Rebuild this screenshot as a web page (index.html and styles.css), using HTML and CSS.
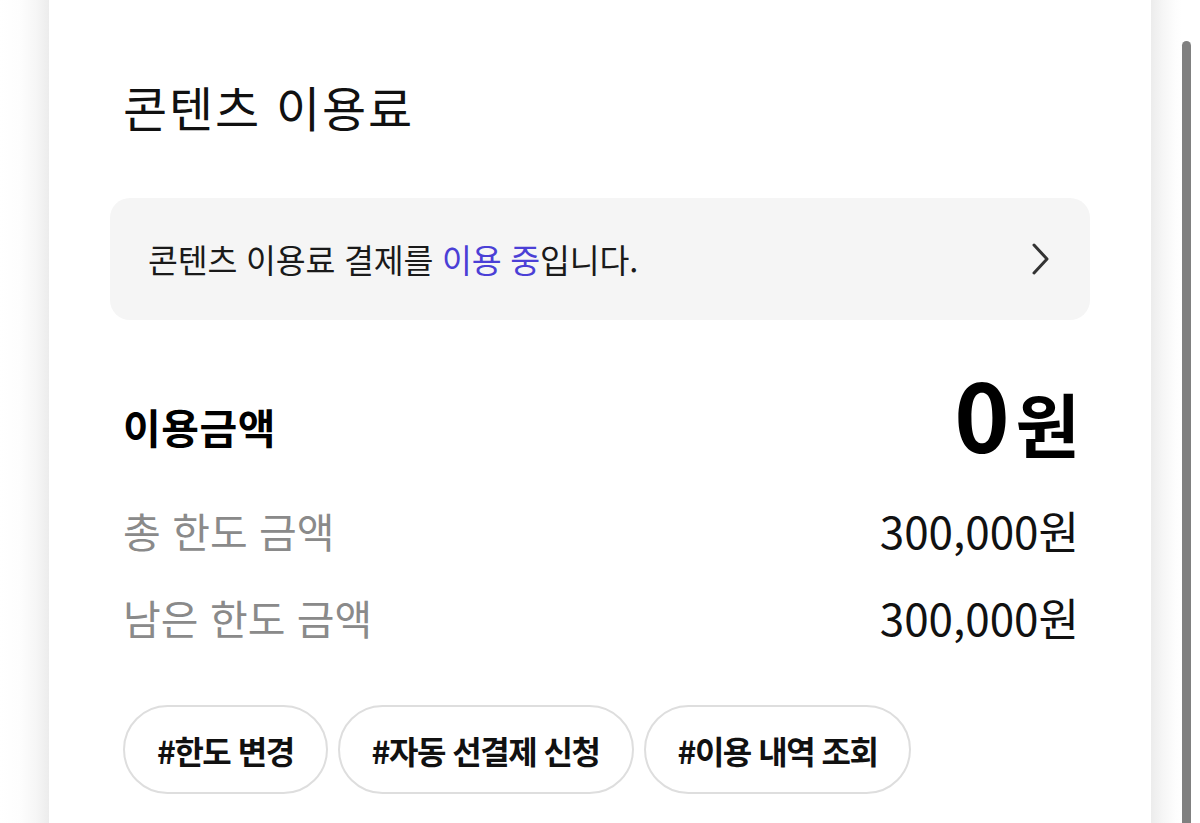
FILE: index.html
```html
<!DOCTYPE html>
<html lang="ko">
<head>
<meta charset="utf-8">
<link rel="stylesheet" href="styles.css">
</head>
<body>
<div class="page">
  <div class="side side-left"></div>
  <main class="card">
    <h1 class="title">콘텐츠 이용료</h1>
    <a class="status">
      <span class="status-text">콘텐츠 이용료 결제를 <span class="accent">이용 중</span>입니다.</span>
      <svg class="chev" width="22" height="36" viewBox="0 0 22 36"><path d="M4 4 L17 18 L4 32" fill="none" stroke="#333" stroke-width="3" stroke-linecap="round" stroke-linejoin="round"/></svg>
    </a>
    <div class="usage">
      <span class="usage-label">이용금액</span>
      <span class="usage-value"><span class="zero">0</span><span class="won">원</span></span>
    </div>
    <div class="rows">
      <div class="row">
        <span class="row-label">총 한도 금액</span>
        <span class="row-value">300,000원</span>
      </div>
      <div class="row">
        <span class="row-label">남은 한도 금액</span>
        <span class="row-value">300,000원</span>
      </div>
    </div>
    <div class="tags">
      <span class="tag">#한도 변경</span>
      <span class="tag">#자동 선결제 신청</span>
      <span class="tag">#이용 내역 조회</span>
    </div>
  </main>
  <div class="side side-right"></div>
</div>
<div class="scroll-thumb"></div>
</body>
</html>
```
FILE: styles.css
```css
html, body {
  margin: 0;
  padding: 0;
  background: #fff;
  height: 100%;
  overflow: hidden;
}
body {
  font-family: "Noto Sans CJK KR", "Noto Sans", sans-serif;
  color: #111;
}
.page {
  display: flex;
  height: 823px;
}
.side {
  flex: none;
}
.side-left {
  width: 49px;
  background: linear-gradient(to right, #fff 0px, #fdfdfd 20px, #f6f6f6 36px, #ececec 49px);
}
.side-right {
  width: 31px;
  background: linear-gradient(to right, #ececec 0px, #f6f6f6 12px, #fdfdfd 24px, #fff 31px);
}
.card {
  width: 1102px;
  flex: none;
  background: #fff;
  padding: 70px 61px 0;
  box-sizing: border-box;
}
.title {
  margin: 0 0 0 13px;
  font-size: 48px;
  font-weight: 400;
  line-height: 72px;
  letter-spacing: 1.8px;
  color: #111;
}
.status {
  margin-top: 56px;
  height: 122px;
  background: #f5f5f5;
  border-radius: 20px;
  display: flex;
  align-items: center;
  justify-content: space-between;
  padding: 0 38px;
  box-sizing: border-box;
}
.status-text {
  font-size: 32.5px;
  line-height: 40px;
  color: #1a1a1a;
  letter-spacing: -0.2px;
}
.accent {
  color: #4b3fd6;
}
.usage {
  display: flex;
  align-items: flex-end;
  justify-content: space-between;
  margin-top: 42px;
  padding: 0 10px 0 13px;
  height: 100px;
}
.usage-label {
  font-size: 41px;
  font-weight: 700;
  line-height: 50px;
  margin-bottom: 11px;
  letter-spacing: 0.5px;
  color: #000;
}
.usage-value {
  display: block;
  color: #000;
  font-weight: 700;
  font-size: 94px;
  line-height: 100px;
  height: 100px;
}
.zero {
  font-size: 94px;
  line-height: 100px;
}
.won {
  font-size: 70px;
  line-height: 70px;
  margin-left: 6px;
}
.rows {
  margin-top: 24px;
}
.row {
  display: flex;
  justify-content: space-between;
  align-items: center;
  padding: 0 13px;
  height: 87px;
}
.row-label {
  font-size: 41px;
  color: #8a8a8a;
}
.row-value {
  font-size: 44px;
  color: #111;
  margin-right: -2px;
}
.tags {
  display: flex;
  gap: 10px;
  padding-left: 13px;
  margin-top: 45px;
}
.tag {
  height: 89px;
  box-sizing: border-box;
  border: 2px solid #dedede;
  border-radius: 45px;
  padding: 0 32px;
  display: flex;
  align-items: center;
  font-size: 32px;
  font-weight: 700;
  letter-spacing: -1.5px;
  color: #111;
}
.scroll-thumb {
  position: absolute;
  top: 41px;
  left: 1182px;
  width: 9px;
  bottom: 0;
  background: #808080;
  border-radius: 5px 5px 0 0;
}
```
